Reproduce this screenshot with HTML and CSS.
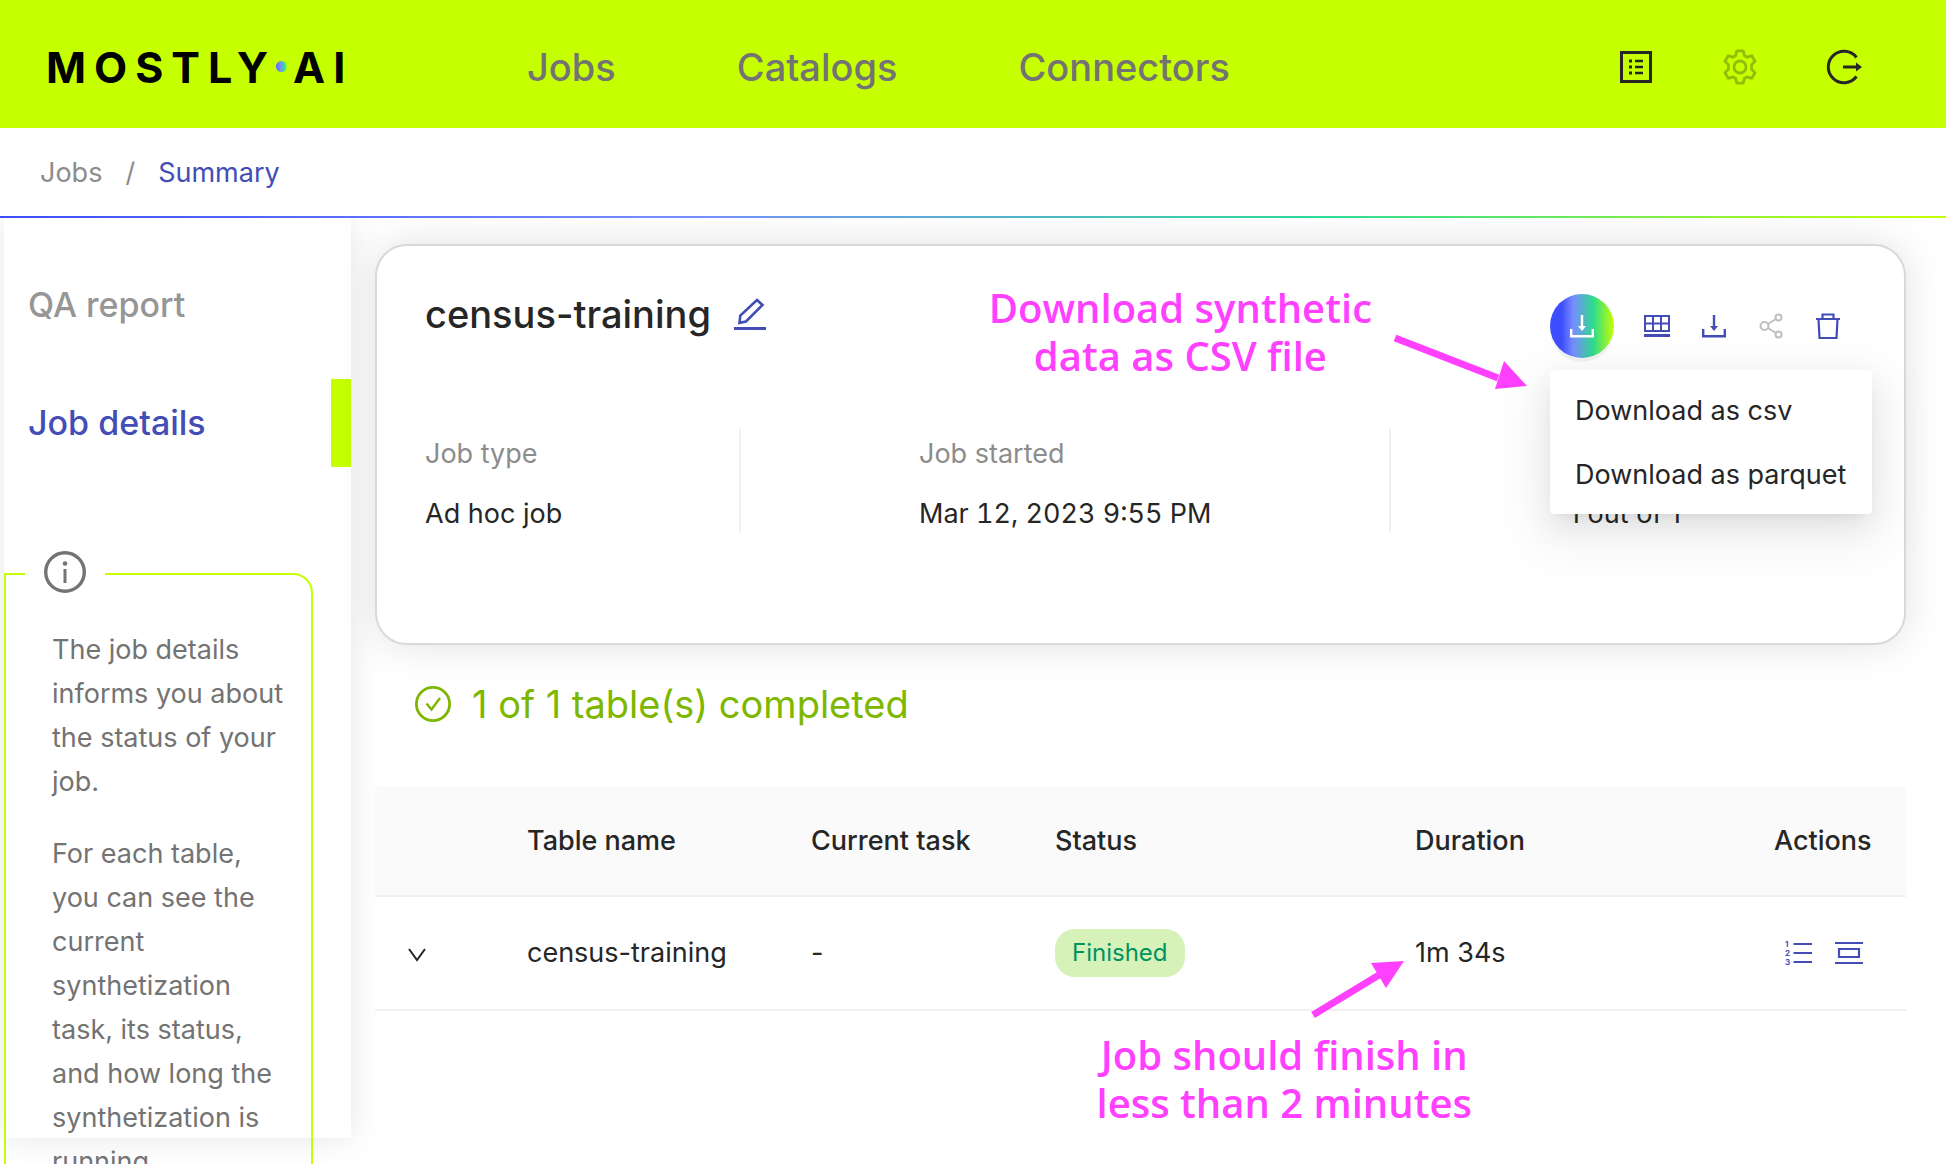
FILE: index.html
```html
<!DOCTYPE html>
<html lang="en">
<head>
<meta charset="utf-8">
<title>Job summary - MOSTLY AI</title>
<link rel="stylesheet" href="styles.css">
</head>
<body>
<header class="topbar">
  <a class="logo" href="#" aria-label="MOSTLY AI"><span>MOSTLY</span><i class="logo-dot"></i><span>AI</span></a>
  <nav class="nav">
    <a href="#">Jobs</a>
    <a href="#">Catalogs</a>
    <a href="#">Connectors</a>
  </nav>
  <div class="tools">
    <button class="icon-btn" type="button" aria-label="Release notes">
      <svg width="36" height="36" viewBox="0 0 36 36" fill="none" stroke="currentColor"><rect x="3.500" y="3.500" width="29" height="29" stroke-width="3"/><path d="M17 12h8M17 18h8M17 24h8" stroke-width="2.400"/><path d="M11 12h3M11 18h3M11 24h3" stroke-width="3"/></svg>
    </button>
    <button class="icon-btn icon-btn-off" type="button" aria-label="Settings">
      <svg width="36" height="36" viewBox="0 0 36 36" fill="none" stroke="currentColor" stroke-width="2.800" stroke-linejoin="round"><path d="M14.800 1.800h6.400l1.200 4.800 2.800 1.600 4.600-1.500 3.200 5.600-3.400 3.400v4.600l3.400 3.400-3.200 5.600-4.600-1.500-2.800 1.600-1.200 4.800h-6.400l-1.200-4.800-2.800-1.600-4.600 1.500-3.200-5.600 3.400-3.400v-4.600l-3.400-3.400 3.200-5.600 4.600 1.500 2.800-1.600z"/><circle cx="18" cy="18" r="6"/></svg>
    </button>
    <button class="icon-btn" type="button" aria-label="Log out">
      <svg width="36" height="36" viewBox="0 0 36 36" fill="none" stroke="currentColor" stroke-width="3"><path d="M30.500 8.500a15.700 15.700 0 1 0 0 19"/><path d="M17 18h14"/><path d="M30 13.500l6 4.500-6 4.500z" fill="currentColor" stroke="none"/></svg>
    </button>
  </div>
</header>

<nav class="crumbs" aria-label="Breadcrumb">
  <a href="#">Jobs</a><span>/</span><a class="current" href="#">Summary</a>
</nav>

<div class="layout">
  <aside class="sidebar">
    <a class="side-link" href="#">QA report</a>
    <a class="side-link active" href="#">Job details</a>
    <section class="info">
      <span class="info-icon">
        <svg width="42" height="42" viewBox="0 0 42 42" fill="none" stroke="currentColor"><circle cx="21" cy="21" r="19.300" stroke-width="3.400"/><path d="M21 18v14" stroke-width="3"/><circle cx="21" cy="12.500" r="2.300" fill="currentColor" stroke="none"/></svg>
      </span>
      <p>The job details informs you about the status of your job.</p>
      <p>For each table, you can see the current synthetization task, its status, and how long the synthetization is running.</p>
    </section>
  </aside>

  <main class="main">
    <section class="card">
      <div class="card-head">
        <div class="title">
          <h1>census-training</h1>
          <button class="icon-btn link" type="button" aria-label="Rename job">
            <svg width="32" height="32" viewBox="0 0 32 32" fill="none" stroke="currentColor"><path d="M0 30.500h32" stroke-width="3"/><path d="M23 2l5.500 5L12 23.500l-6.500 1.300.8-7.300z" stroke-width="2.600"/></svg>
          </button>
        </div>
        <div class="actions">
          <div class="dropdown">
            <button class="round" type="button" aria-label="Download synthetic data" aria-expanded="true">
              <svg width="28" height="28" viewBox="0 0 28 28" fill="none" stroke="currentColor" stroke-width="2.400"><path d="M3.200 17v7.300h21.600V17M14 3v12"/><path d="M10 14h8l-4 5z" fill="currentColor" stroke="none"/></svg>
            </button>
            <div class="menu">
              <button type="button">Download as csv</button>
              <button type="button">Download as parquet</button>
            </div>
          </div>
          <button class="icon-btn link" type="button" aria-label="View tables">
            <svg width="28" height="28" viewBox="0 0 28 28" fill="none" stroke="currentColor" stroke-width="2"><path d="M2 4h24v15H2zM2 11.500h24M10 4v15M18 4v15"/><path d="M1 23.500h26" stroke-width="3"/></svg>
          </button>
          <button class="icon-btn link" type="button" aria-label="Download">
            <svg width="28" height="28" viewBox="0 0 28 28" fill="none" stroke="currentColor" stroke-width="2.400"><path d="M3.200 17v7.300h21.600V17M14 3v12"/><path d="M10 14h8l-4 5z" fill="currentColor" stroke="none"/></svg>
          </button>
          <button class="icon-btn muted" type="button" aria-label="Share">
            <svg width="28" height="28" viewBox="0 0 28 28" fill="none" stroke="currentColor" stroke-width="2"><circle cx="7.500" cy="14" r="4"/><circle cx="21.500" cy="5.500" r="3"/><circle cx="21.500" cy="22.500" r="3"/><path d="M11 12l8-5M11 16l8 5"/></svg>
          </button>
          <button class="icon-btn link" type="button" aria-label="Delete">
            <svg width="28" height="28" viewBox="0 0 28 28" fill="none" stroke="currentColor" stroke-width="2.200"><path d="M2 7h24M8.500 7V2.500h11V7M4.500 7l1 19h17l1-19"/></svg>
          </button>
        </div>
      </div>
      <dl class="facts">
        <div><dt>Job type</dt><dd>Ad hoc job</dd></div>
        <div><dt>Job started</dt><dd><time>Mar 12, 2023 9:55 PM</time></dd></div>
        <div><dt></dt><dd>1 out of 1</dd></div>
      </dl>
      <div class="note note-download">
        <p>Download synthetic<br>data as CSV file</p>
        <svg width="136" height="60" viewBox="0 0 136 60"><path d="M3 6l103 40" stroke="#ff40ff" stroke-width="7"/><path d="M112 29l23 25-32 3z" fill="#ff40ff"/></svg>
      </div>
    </section>

    <h2 class="progress">
      <svg width="36" height="36" viewBox="0 0 36 36" fill="none" stroke="currentColor"><circle cx="18" cy="18" r="16.600" stroke-width="2.800"/><path d="M11.500 17.500l5 6L25 12" stroke-width="2.400"/></svg>
      1 of 1 table(s) completed
    </h2>

    <div class="table-wrap">
      <table>
        <colgroup><col class="c-toggle"><col class="c-name"><col class="c-task"><col class="c-status"><col class="c-time"><col class="c-act"></colgroup>
        <thead>
          <tr><th></th><th>Table name</th><th>Current task</th><th>Status</th><th>Duration</th><th>Actions</th></tr>
        </thead>
        <tbody>
          <tr>
            <td><button class="icon-btn" type="button" aria-label="Expand row"><svg width="20" height="20" viewBox="0 0 20 20" fill="none" stroke="currentColor" stroke-width="2"><path d="M2 6l8 11 8-11"/></svg></button></td>
            <td>census-training</td>
            <td>-</td>
            <td><span class="tag">Finished</span></td>
            <td>1m 34s</td>
            <td>
              <div class="row-actions">
                <button class="icon-btn link" type="button" aria-label="Tasks">
                  <svg width="28" height="28" viewBox="0 0 28 28" stroke="currentColor" stroke-width="2.200"><path d="M8.500 5H27M8.500 14H27M8.500 23H27"/><g class="digits"><text x="0" y="8">1</text><text x="0" y="17">2</text><text x="0" y="26">3</text></g></svg>
                </button>
                <button class="icon-btn link" type="button" aria-label="Details">
                  <svg width="28" height="28" viewBox="0 0 28 28" fill="none" stroke="currentColor" stroke-width="2.200"><path d="M0 4h28M0 24h28"/><path d="M4 10h20v8H4z"/></svg>
                </button>
              </div>
            </td>
          </tr>
        </tbody>
      </table>
      <div class="note note-time">
        <svg width="96" height="60" viewBox="0 0 96 60"><path d="M3 56l66-40" stroke="#ff40ff" stroke-width="7"/><path d="M61 4l33-2-18 27z" fill="#ff40ff"/></svg>
        <p>Job should finish in<br>less than 2 minutes</p>
      </div>
    </div>
  </main>
</div>
</body>
</html>
```

FILE: styles.css
```css
:root {
  --lime: #c6ff00;
  --blue: #434db5;
  --ink: #262626;
  --grey: #8c8c8c;
  --dim: #737373;
  --pink: #ff40ff;
  --display: Inter, "Liberation Sans", sans-serif;
}

* { box-sizing: border-box; }

body {
  margin: 0;
  height: 100vh;
  display: flex;
  flex-direction: column;
  overflow: hidden;
  background: #fff;
  color: var(--ink);
  font: 400 27px/44px Inter, "Liberation Sans", sans-serif;
}

a { color: inherit; text-decoration: none; }
h1, h2, p, dl, dd { margin: 0; }
svg { display: block; }

button {
  padding: 0;
  border: 0;
  background: none;
  color: inherit;
  font: inherit;
  cursor: pointer;
}

.icon-btn { display: block; flex: none; }
.icon-btn-off { opacity: .3; }
.link { color: var(--blue); }
.muted { color: #bfbfbf; }

/* Top bar */
.topbar {
  flex: none;
  height: 128px;
  padding: 5px 84px 0 46px;
  display: flex;
  align-items: center;
  background: var(--lime);
}

.logo {
  width: 303px;
  display: flex;
  align-items: center;
  color: #000;
  font: 700 43px/48px var(--display);
  letter-spacing: 8px;
}

.logo-dot {
  flex: none;
  width: 11px;
  height: 11px;
  margin-right: 6px;
  border-radius: 50%;
  background: linear-gradient(90deg, #5566ff, #788cff 40%, #2ddc96 75%, #a0ee40);
}

.nav {
  margin-left: 178px;
  display: flex;
  gap: 121px;
  color: var(--dim);
  font: 500 38px/48px var(--display);
}

.tools { margin-left: auto; display: flex; gap: 68px; }

/* Breadcrumb */
.crumbs {
  flex: none;
  height: 90px;
  padding: 2px 40px 0;
  display: flex;
  align-items: center;
  gap: 23px;
  color: var(--grey);
  border-bottom: 2px solid;
  border-image: linear-gradient(90deg, #3d4eff, #788cff 35%, #2ddc96 68%, #c6ff00) 1;
}

.crumbs .current { color: var(--blue); }

.layout { flex: 1; min-height: 0; display: flex; overflow: hidden; }

/* Sidebar */
.sidebar {
  flex: none;
  width: 347px;
  height: calc(100% - 26px);
  margin-left: 4px;
  padding-top: 43px;
  box-shadow: 0 0 32px rgba(0, 0, 0, .1);
}

.side-link {
  height: 88px;
  margin-bottom: 30px;
  padding-left: 24px;
  display: flex;
  align-items: center;
  color: #969696;
  font: 500 34px/44px var(--display);
}

.side-link.active {
  margin-bottom: 106px;
  border-right: 20px solid var(--lime);
  color: var(--blue);
}

.info {
  position: relative;
  width: 309px;
  padding: 53px 22px 28px 46px;
  border: 2px solid var(--lime);
  border-radius: 0 20px 0 0;
  color: var(--dim);
}

.info p + p { margin-top: 28px; }

.info-icon {
  position: absolute;
  top: -24px;
  left: 19px;
  padding: 0 19px;
  background: #fff;
}

/* Main column */
.main { flex: 1; min-width: 0; padding: 26px 40px 0 24px; }

.card {
  position: relative;
  height: 401px;
  padding: 48px 48px 0;
  border: 2px solid #d9d9d9;
  border-radius: 32px;
  background: #fff;
  box-shadow: 0 0 40px rgba(0, 0, 0, .12);
}

.card-head { height: 64px; display: flex; align-items: center; }
.title { align-self: flex-start; display: flex; align-items: center; gap: 23px; }
.title h1 { font: 500 38px/40px var(--display); }

.actions { margin: 0 14px 0 auto; display: flex; align-items: center; gap: 29px; }

.dropdown { position: relative; }

.round {
  width: 64px;
  height: 64px;
  display: grid;
  place-items: center;
  border-radius: 50%;
  background: linear-gradient(90deg, #3d4eff 18%, #788cff 36%, #2ddc8c 68%, #c6ff00);
  box-shadow: 0 4px 0 rgba(0, 0, 0, .05);
  color: #fff;
}

.menu {
  position: absolute;
  z-index: 2;
  top: 76px;
  left: 0;
  padding: 8px 0;
  border-radius: 4px;
  background: #fff;
  box-shadow: 0 6px 12px -8px rgba(0, 0, 0, .12), 0 12px 32px rgba(0, 0, 0, .08), 0 18px 56px 16px rgba(0, 0, 0, .05);
}

.menu button {
  display: block;
  width: 322px;
  padding: 11px 0 9px 25px;
  text-align: left;
  white-space: nowrap;
}

.facts {
  margin-top: 71px;
  display: grid;
  grid-template-columns: 314fr 650fr 467fr;
}

.facts div { height: 104px; padding-top: 3px; display: grid; gap: 16px; align-content: start; }
.facts div + div { padding-left: 178px; border-left: 2px solid #f0f0f0; }
.facts dt { min-height: 44px; color: var(--grey); }
.facts time { font-variant-numeric: tabular-nums; }

.progress {
  margin: 37px 0 0 40px;
  display: flex;
  align-items: center;
  gap: 21px;
  color: #7db700;
  font: 400 38px/44px var(--display);
}

/* Table */
.table-wrap { position: relative; margin-top: 61px; }

table { width: 100%; border-collapse: collapse; table-layout: fixed; }
.c-toggle { width: 120px; }
.c-name { width: 284px; }
.c-task { width: 244px; }
.c-status { width: 360px; }
.c-act { width: 164px; }

th, td { padding: 32px; text-align: left; border-bottom: 2px solid #f0f0f0; }
th { height: 109px; background: #fafafa; font-weight: 500; }
td { height: 114px; }

.tag {
  display: inline-block;
  padding: 0 17px;
  border-radius: 20px;
  background: #d6f2b9;
  color: #00925f;
  font-size: 24px;
  line-height: 48px;
}

.row-actions { display: flex; gap: 22px; padding-left: 11px; }
.digits { fill: currentColor; stroke: none; font: 700 8px/8px Inter, sans-serif; }

/* Callouts */
.note {
  position: absolute;
  display: flex;
  color: var(--pink);
  font: 600 40px/48px "Open Sans", "Noto Sans", sans-serif;
  text-align: center;
  white-space: nowrap;
}

.note svg { flex: none; }
.note-download { top: 38px; right: 376px; gap: 20px; align-items: flex-end; }
.note-download svg { margin-bottom: -12px; }
.note-time { top: 172px; right: 434px; flex-direction: column; gap: 12px; }
.note-time svg { align-self: flex-end; margin-right: 66px; }
```
